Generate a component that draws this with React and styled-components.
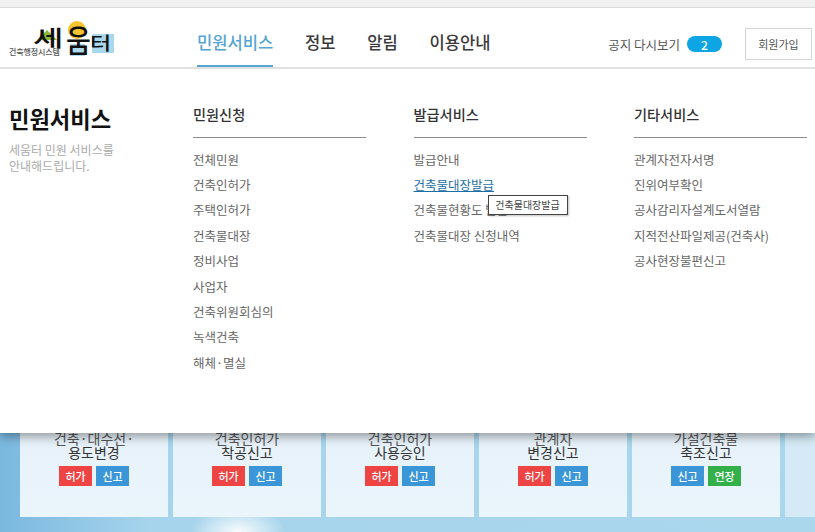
import React from 'react'
import styled, { createGlobalStyle } from 'styled-components'

const GlobalStyle = createGlobalStyle`
  html, body {
    margin: 0;
    padding: 0;
    height: 100%;
    overflow: hidden;
    background: #fff;
  }
  body {
    font-family: "Noto Sans CJK KR", "Noto Sans", sans-serif;
    color: #333;
  }
`

const Page = styled.div`
  display: flex;
  flex-flow: column nowrap;
  width: 815px;
  height: 532px;
  overflow: hidden;
`

const TopStrip = styled.div`
  height: 7px;
  background: #f1f1f1;
  border-bottom: 1px solid #dedede;
`

const Header = styled.header`
  position: relative;
  z-index: 3;
  display: flex;
  align-items: stretch;
  height: 59px;
  background: #fff;
  border-bottom: 2px solid #e0e0e0;
`

const LogoBox = styled.div`
  position: relative;
  width: 197px;
  flex: none;
`

const LogoCaption = styled.span`
  position: absolute;
  left: 9px;
  top: 39px;
  font-size: 8px;
  line-height: 10px;
  font-weight: 500;
  color: #555;
  letter-spacing: -0.1px;
`

const LogoMark = styled.svg`
  position: absolute;
  left: 30px;
  top: 12px;
`

const LogoWord = styled.div`
  position: absolute;
  left: 33px;
  top: 17px;
  display: flex;
  align-items: flex-start;
`

const LogoGlyph = styled.span`
  display: block;
  width: ${props => props.$width}px;
  font-size: ${props => props.$size}px;
  line-height: ${props => props.$size}px;
  font-weight: 500;
  color: #111;
  transform: ${props => props.$transform};
  transform-origin: left top;
`

const Nav = styled.nav`
  display: flex;
  gap: 31.7px;
`

const NavItem = styled.a`
  display: flex;
  align-items: center;
  height: 59px;
  padding-top: 11px;
  box-sizing: border-box;
  font-size: 16.6px;
  font-weight: 500;
  color: ${props => (props.$active ? '#55a5d3' : '#3a3a3a')};
  border-bottom: 2px solid ${props => (props.$active ? '#55a5d3' : 'transparent')};
`

const HeaderRight = styled.div`
  display: flex;
  align-items: center;
  margin-left: auto;
  padding: 13px 3px 0 0;
`

const NoticeLabel = styled.span`
  font-size: 12.5px;
  color: #555;
`

const NoticeCount = styled.span`
  display: flex;
  align-items: center;
  justify-content: center;
  width: 35px;
  height: 16px;
  margin: 0 23px 0 7px;
  border-radius: 8px;
  background: #0ea5e4;
  color: #fff;
  font-size: 12px;
  font-weight: 500;
`

const JoinButton = styled.button`
  width: 67px;
  height: 32px;
  padding: 0;
  border: 1px solid #d4d4d4;
  background: #fff;
  color: #555;
  font: inherit;
  font-size: 11px;
`

const MegaMenu = styled.section`
  position: relative;
  z-index: 2;
  display: flex;
  height: 364px;
  background: #fff;
  box-shadow: 0 3px 10px rgba(0, 0, 0, 0.4);
`

const Intro = styled.div`
  width: 193px;
  flex: none;
  padding: 33px 0 0 9px;
  box-sizing: border-box;
`

const IntroTitle = styled.h2`
  margin: 0 0 8px;
  font-size: 22.2px;
  line-height: 32px;
  font-weight: 700;
  color: #111;
`

const IntroText = styled.p`
  margin: 0;
  font-size: 12px;
  line-height: 16px;
  color: #aaa;
`

const Column = styled.div`
  width: 173px;
  flex: none;
  margin-right: 47.5px;
  padding-top: 33px;
`

const ColumnTitle = styled.h3`
  margin: 0;
  height: 35px;
  font-size: 14.2px;
  line-height: 24px;
  font-weight: 500;
  color: #333;
  border-bottom: 1px solid #8c8c8c;
`

const LinkList = styled.ul`
  margin: 8.6px 0 0;
  padding: 0;
  list-style: none;
`

const LinkItem = styled.li`
  position: relative;
  height: 25.4px;
  font-size: 12.5px;
  line-height: 25px;
  color: ${props => (props.$hover ? '#1c6ea4' : '#666')};
  text-decoration: ${props => (props.$hover ? 'underline' : 'none')};
`

const Tooltip = styled.div`
  position: absolute;
  left: 74px;
  top: 23px;
  z-index: 3;
  width: 78px;
  height: 18px;
  font-size: 10px;
  line-height: 18px;
  text-align: center;
  color: #444;
  background: #fff;
  border: 1px solid #444;
  box-shadow: 1px 1px 2px rgba(0, 0, 0, 0.25);
  white-space: nowrap;
`

const Hero = styled.section`
  flex: 1;
  display: flex;
  gap: 5px;
  padding: 0 0 15px 20px;
  overflow: hidden;
  min-height: 0;
  background:
    radial-gradient(ellipse 48px 28px at 238px 100px, rgba(255, 255, 255, 0.95), rgba(255, 255, 255, 0) 100%),
    linear-gradient(90deg, #7ab8df 0, #a6d4ec 150px, #aad7ec 100%);
`

const Card = styled.article`
  display: flex;
  flex-flow: column nowrap;
  justify-content: flex-end;
  align-items: center;
  width: 148px;
  flex: none;
  padding-bottom: 31px;
  box-sizing: border-box;
  background: ${props => (props.$faded ? '#d5eaf6' : 'linear-gradient(180deg, #e6f1f9, #ebf5fc)')};
  overflow: hidden;
`

const CardLine = styled.div`
  flex: none;
  font-size: 14px;
  line-height: 14px;
  color: ${props => (props.$strong ? '#333' : '#555')};
`

const Badges = styled.div`
  display: flex;
  flex: none;
  gap: 4px;
  margin-top: 7px;
`

const Badge = styled.span`
  width: 33px;
  height: 20px;
  font-size: 11px;
  font-weight: 500;
  line-height: 20px;
  text-align: center;
  color: #fff;
  background: ${props => props.$color};
`

const RED = '#ef4444'
const BLUE = '#3a96d6'
const GREEN = '#33b04a'

const menu = [
  {
    title: '민원신청',
    links: ['전체민원', '건축인허가', '주택인허가', '건축물대장', '정비사업', '사업자', '건축위원회심의', '녹색건축', '해체·멸실']
  },
  {
    title: '발급서비스',
    links: ['발급안내', '건축물대장발급', '건축물현황도 발급', '건축물대장 신청내역'],
    hover: '건축물대장발급'
  },
  {
    title: '기타서비스',
    links: ['관계자전자서명', '진위여부확인', '공사감리자설계도서열람', '지적전산파일제공(건축사)', '공사현장불편신고']
  }
]

const cards = [
  { top: '건축·대수선·', bottom: '용도변경', badges: [['허가', RED], ['신고', BLUE]] },
  { top: '건축인허가', bottom: '착공신고', badges: [['허가', RED], ['신고', BLUE]] },
  { top: '건축인허가', bottom: '사용승인', badges: [['허가', RED], ['신고', BLUE]] },
  { top: '관계자', bottom: '변경신고', badges: [['허가', RED], ['신고', BLUE]] },
  { top: '가설건축물', bottom: '축조신고', badges: [['신고', BLUE], ['연장', GREEN]] }
]

const App = () => (
  <Page>
    <GlobalStyle />
    <TopStrip />
    <Header>
      <LogoBox>
        <LogoMark width="90" height="42" viewBox="0 0 90 42">
          {/* sun, sky block and the green roof behind the word */}
          <circle cx="47" cy="10" r="9" fill="#f6c52e" />
          <rect x="62" y="14" width="22" height="19" fill="#a9d8ee" />
          <rect x="40" y="24" width="15" height="12" fill="#a9d8ee" />
          <path d="M7 20 L17 10 L27 20 Z" fill="#8fb83f" />
        </LogoMark>
        <LogoWord>
          <LogoGlyph $width={33} $size={22} $transform="scaleX(1.5)">세</LogoGlyph>
          <LogoGlyph $width={24} $size={27} $transform="translateY(-1px) scaleY(1.12)">움</LogoGlyph>
          <LogoGlyph $width={22} $size={23} $transform="translateY(8px) scaleY(0.8)">터</LogoGlyph>
        </LogoWord>
        <LogoCaption>건축행정시스템</LogoCaption>
      </LogoBox>
      <Nav>
        <NavItem $active>민원서비스</NavItem>
        <NavItem>정보</NavItem>
        <NavItem>알림</NavItem>
        <NavItem>이용안내</NavItem>
      </Nav>
      <HeaderRight>
        <NoticeLabel>공지 다시보기</NoticeLabel>
        <NoticeCount>2</NoticeCount>
        <JoinButton>회원가입</JoinButton>
      </HeaderRight>
    </Header>
    <MegaMenu>
      <Intro>
        <IntroTitle>민원서비스</IntroTitle>
        <IntroText>세움터 민원 서비스를<br />안내해드립니다.</IntroText>
      </Intro>
      {menu.map(col => (
        <Column key={col.title}>
          <ColumnTitle>{col.title}</ColumnTitle>
          <LinkList>
            {col.links.map(link => (
              <LinkItem key={link} $hover={link === col.hover}>
                {link}
                {link === col.hover && <Tooltip>{link}</Tooltip>}
              </LinkItem>
            ))}
          </LinkList>
        </Column>
      ))}
    </MegaMenu>
    <Hero>
      {cards.map(card => (
        <Card key={card.bottom}>
          <CardLine>{card.top}</CardLine>
          <CardLine $strong>{card.bottom}</CardLine>
          <Badges>
            {card.badges.map(([label, color]) => (
              <Badge key={label} $color={color}>{label}</Badge>
            ))}
          </Badges>
        </Card>
      ))}
      <Card $faded />
    </Hero>
  </Page>
)

export default App
